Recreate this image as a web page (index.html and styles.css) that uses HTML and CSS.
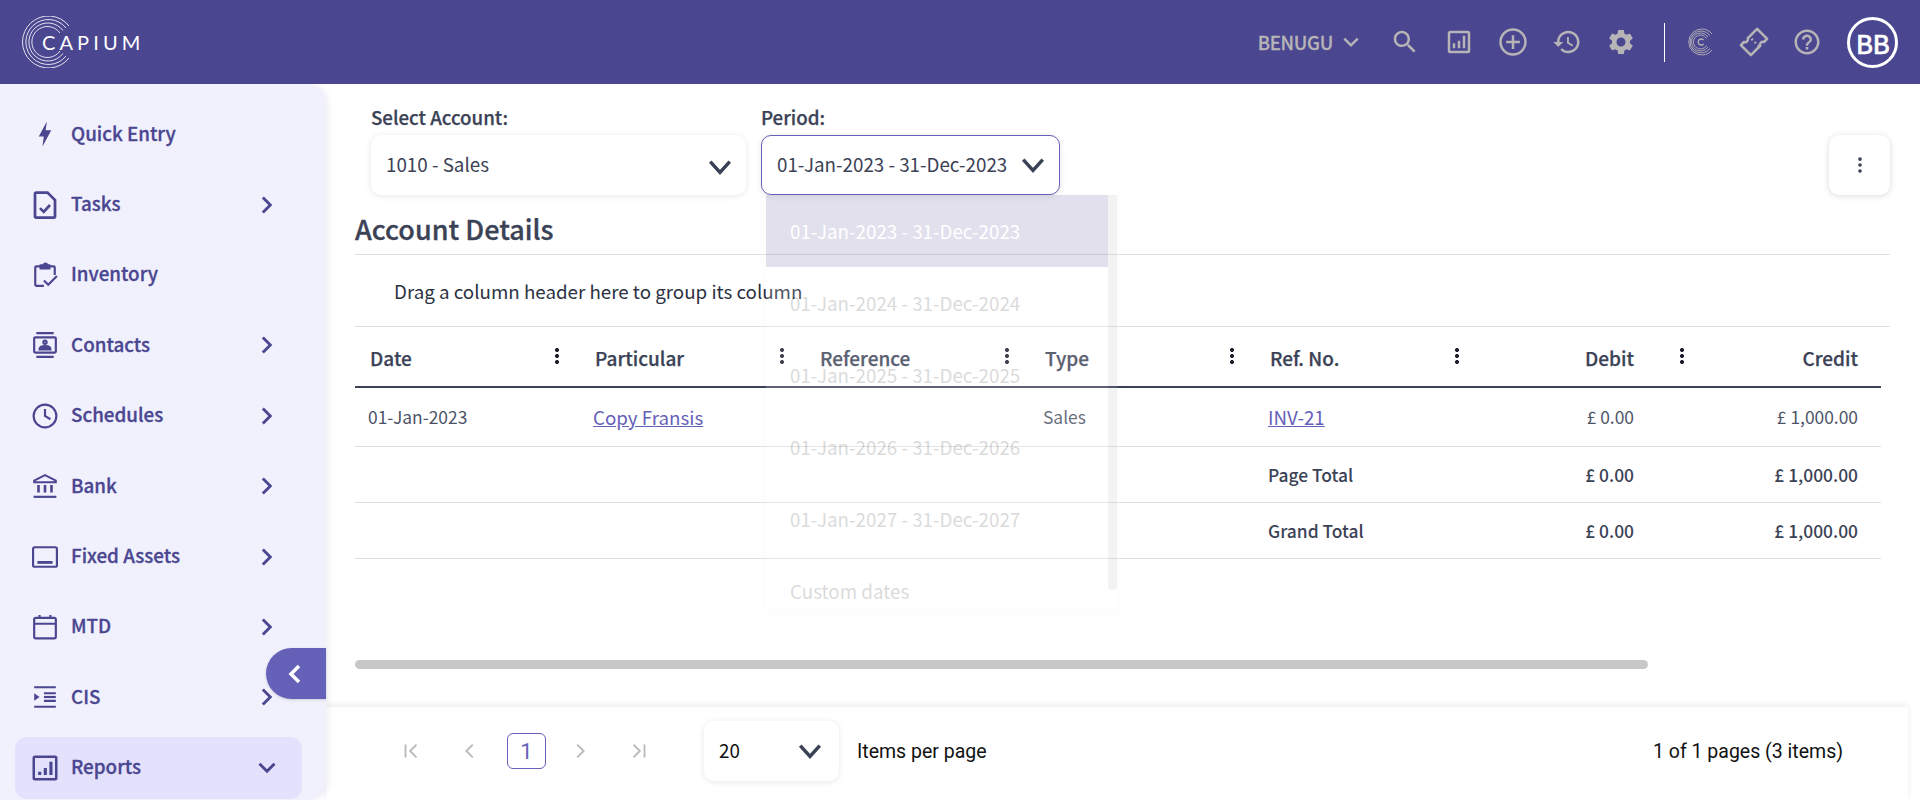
FILE: index.html
```html
<!DOCTYPE html>
<html lang="en">
<head>
    <meta charset="UTF-8">
    <meta name="viewport" content="width=device-width, initial-scale=1.0">
    <title>Account Details</title>
    <link rel="stylesheet" href="styles.css">
</head>

<body>
    <!-- Top bar -->
    <header class="topbar">
        <div class="logo">
            <svg class="logo-rings" viewBox="0 0 52 52" fill="none" stroke="#fff">
                <path stroke-width="1" d="M47 10A26 26 0 1 0 47 42"/>
                <path stroke-width="1" d="M44 12A22.5 22.5 0 1 0 44 40"/>
                <path stroke-width="1" d="M41 14.500A19 19 0 1 0 41 37.500"/>
                <path stroke-width="1" d="M38 17A15.500 15.500 0 1 0 38 35"/>
            </svg>
            <span class="logo-text">CAPIUM</span>
        </div>
        <div class="topbar-right">
            <button class="client">BENUGU
                <svg class="client-caret" viewBox="0 0 24 24"><path d="M4 8l8 8 8-8" fill="none" stroke="currentColor" stroke-width="3"/></svg>
            </button>
            <svg class="top-icon" viewBox="0 0 24 24"><path fill="currentColor" d="M15.5 14h-.79l-.28-.27C15.41 12.59 16 11.11 16 9.5 16 5.91 13.09 3 9.5 3S3 5.91 3 9.5 5.91 16 9.5 16c1.61 0 3.09-.59 4.23-1.57l.27.28v.79l5 4.99L20.49 19l-4.99-5zm-6 0C7.01 14 5 11.990 5 9.500S7.010 5 9.500 5 14 7.010 14 9.500 11.990 14 9.500 14z"/></svg>
            <svg class="top-icon" viewBox="0 0 24 24"><path fill="currentColor" d="M5 3h14a2 2 0 0 1 2 2v14a2 2 0 0 1-2 2H5a2 2 0 0 1-2-2V5a2 2 0 0 1 2-2zm0 2v14h14V5H5zm2 8h2v4H7v-4zm4-2h2v6h-2v-6zm4-4h2v10h-2V7z"/></svg>
            <svg class="top-icon" viewBox="0 0 24 24" fill="none" stroke="currentColor" stroke-width="2"><circle cx="12" cy="12" r="10"/><path d="M12 6.500v11M6.500 12h11"/></svg>
            <svg class="top-icon" viewBox="0 0 24 24"><path fill="currentColor" d="M13 3c-4.970 0-9 4.030-9 9H1l3.890 3.890.07.14L9 12H6c0-3.870 3.130-7 7-7s7 3.130 7 7-3.130 7-7 7c-1.930 0-3.680-.79-4.940-2.060l-1.420 1.420C8.270 19.990 10.510 21 13 21c4.970 0 9-4.030 9-9s-4.030-9-9-9zm-1 5v5l4.280 2.540.72-1.210-3.500-2.080V8H12z"/></svg>
            <svg class="top-icon" viewBox="0 0 24 24"><path fill="currentColor" d="M19.140 12.940c.04-.3.06-.61.06-.94 0-.32-.02-.64-.07-.94l2.030-1.580c.18-.14.23-.41.12-.61l-1.920-3.320c-.12-.22-.37-.29-.59-.22l-2.390.96c-.5-.38-1.030-.7-1.620-.94l-.36-2.540c-.04-.24-.24-.41-.48-.41h-3.840c-.24 0-.43.17-.47.41l-.36 2.540c-.59.24-1.130.57-1.620.94l-2.390-.96c-.22-.08-.47 0-.59.22L2.740 8.870c-.12.21-.08.47.12.61l2.030 1.580c-.05.3-.09.63-.09.94s.02.64.07.94l-2.030 1.580c-.18.14-.23.41-.12.61l1.920 3.320c.12.22.37.29.59.22l2.390-.96c.5.38 1.030.7 1.620.94l.36 2.540c.05.24.24.41.48.41h3.840c.24 0 .44-.17.47-.41l.36-2.540c.59-.24 1.130-.56 1.620-.94l2.390.96c.22.08.47 0 .59-.22l1.920-3.320c.12-.22.07-.47-.12-.61l-2.010-1.580zM12 15.600c-1.980 0-3.600-1.620-3.600-3.600s1.620-3.600 3.600-3.600 3.600 1.620 3.600 3.600-1.620 3.600-3.600 3.600z"/></svg>
            <span class="top-divider"></span>
            <svg class="top-icon top-icon-tight" viewBox="0 0 30 30" fill="none" stroke="currentColor"><path stroke-width=".9" d="M26 7A13 13 0 1 0 26 23"/><path stroke-width=".9" d="M24 8.500A11 11 0 1 0 24 21.500"/><path stroke-width=".9" d="M22 10A9 9 0 1 0 22 20"/><path stroke-width=".9" d="M20.500 11.500A7 7 0 1 0 20.500 18.500"/><path stroke-width="1.300" d="M17.500 13A3 3 0 1 0 17.500 17"/></svg>
            <svg class="top-icon top-icon-tight" viewBox="0 0 24 24" fill="none" stroke="currentColor" stroke-width="2" stroke-linejoin="round"><path d="M14.500 1.500l8 8-2.500 2.500a2.300 2.300 0 0 0-3 3L14 18 9.500 22.500l-8-8L4 12a2.300 2.300 0 0 0 3-3z"/><path d="M10 9.500l1 1M12.500 12l1 1M15 14.500l.5.5" stroke-width="1.800"/></svg>
            <svg class="top-icon top-icon-last" viewBox="0 0 24 24"><path fill="currentColor" d="M11 18h2v-2h-2v2zm1-16C6.480 2 2 6.480 2 12s4.480 10 10 10 10-4.480 10-10S17.520 2 12 2zm0 18c-4.410 0-8-3.590-8-8s3.590-8 8-8 8 3.590 8 8-3.590 8-8 8zm0-14c-2.210 0-4 1.790-4 4h2c0-1.100.9-2 2-2s2 .9 2 2c0 2-3 1.750-3 5h2c0-2.250 3-2.500 3-5 0-2.210-1.790-4-4-4z"/></svg>
            <span class="avatar">BB</span>
        </div>
    </header>

    <div class="layout">
        <!-- Side navigation -->
        <aside class="sidebar">
            <nav class="side-nav">
                <a class="nav-item">
                    <svg class="nav-icon" viewBox="0 0 24 24"><path fill="currentColor" d="M13.500 2L7 14h4l-1 8 7-13h-4.500z"/></svg>
                    <span class="nav-label">Quick Entry</span>
                </a>
                <a class="nav-item">
                    <svg class="nav-icon" viewBox="0 0 24 24" fill="none" stroke="currentColor" stroke-width="2.200"><path d="M5 2h9l6 6v13a1 1 0 0 1-1 1H5a1 1 0 0 1-1-1V3a1 1 0 0 1 1-1z"/><path d="M8 14.500l3 3 5-5.500"/></svg>
                    <span class="nav-label">Tasks</span>
                    <svg class="nav-arrow" viewBox="0 0 24 24"><path d="M7 3l9 9-9 9"/></svg>
                </a>
                <a class="nav-item">
                    <svg class="nav-icon nav-icon-lg" viewBox="0 0 24 24" fill="none" stroke="currentColor" stroke-width="2"><path d="M11 22H4a1 1 0 0 1-1-1V5a1 1 0 0 1 1-1h16a1 1 0 0 1 1 1v7"/><path d="M8 6V3h3a1.500 1.500 0 0 1 3 0h2v3z" fill="currentColor"/><path d="M11 17l4 4 8-8"/></svg>
                    <span class="nav-label">Inventory</span>
                </a>
                <a class="nav-item">
                    <svg class="nav-icon nav-icon-lg" viewBox="0 0 24 24" fill="none" stroke="currentColor" stroke-width="2"><path d="M4 1h16M4 23h16"/><rect x="2" y="5" width="20" height="14" rx="1"/><circle cx="12" cy="9.500" r="1.500"/><path d="M7 16c0-2 2.500-3 5-3s5 1 5 3z" fill="currentColor"/></svg>
                    <span class="nav-label">Contacts</span>
                    <svg class="nav-arrow" viewBox="0 0 24 24"><path d="M7 3l9 9-9 9"/></svg>
                </a>
                <a class="nav-item">
                    <svg class="nav-icon nav-icon-lg" viewBox="0 0 24 24" fill="none" stroke="currentColor" stroke-width="2"><circle cx="12" cy="12" r="10.500"/><path d="M12 5.500V12l5 3"/></svg>
                    <span class="nav-label">Schedules</span>
                    <svg class="nav-arrow" viewBox="0 0 24 24"><path d="M7 3l9 9-9 9"/></svg>
                </a>
                <a class="nav-item">
                    <svg class="nav-icon nav-icon-lg" viewBox="0 0 24 24" fill="none" stroke="currentColor" stroke-width="2"><path d="M2 7l10-5 10 5v1.500H2z" fill="none" stroke-width="1.800"/><path d="M6 11v7M12 11v7M18 11v7" stroke-width="2.400"/><path d="M1.500 22h21"/></svg>
                    <span class="nav-label">Bank</span>
                    <svg class="nav-arrow" viewBox="0 0 24 24"><path d="M7 3l9 9-9 9"/></svg>
                </a>
                <a class="nav-item">
                    <svg class="nav-icon nav-icon-lg" viewBox="0 0 24 24" fill="none" stroke="currentColor" stroke-width="2"><rect x="1" y="3" width="22" height="18" rx="1.500"/><path d="M5 17h14" stroke-width="2.600"/></svg>
                    <span class="nav-label">Fixed Assets</span>
                    <svg class="nav-arrow" viewBox="0 0 24 24"><path d="M7 3l9 9-9 9"/></svg>
                </a>
                <a class="nav-item">
                    <svg class="nav-icon nav-icon-lg" viewBox="0 0 24 24" fill="none" stroke="currentColor" stroke-width="2"><rect x="2" y="3.500" width="20" height="19" rx="1.500"/><path d="M2 9h20M7 1v3M17 1v3"/></svg>
                    <span class="nav-label">MTD</span>
                    <svg class="nav-arrow" viewBox="0 0 24 24"><path d="M7 3l9 9-9 9"/></svg>
                </a>
                <a class="nav-item">
                    <svg class="nav-icon nav-icon-lg" viewBox="0 0 24 24" fill="none" stroke="currentColor" stroke-width="2"><path d="M2 3h20M11 8.500h11M11 15.500h11M2 21h20"/><path d="M2 8.500l5 3.500-5 3.500z" fill="currentColor" stroke="none"/><path d="M11 12h11"/></svg>
                    <span class="nav-label">CIS</span>
                    <svg class="nav-arrow" viewBox="0 0 24 24"><path d="M7 3l9 9-9 9"/></svg>
                </a>
                <a class="nav-item nav-item-active">
                    <svg class="nav-icon" viewBox="0 0 24 24"><path fill="currentColor" d="M4 2h16a2 2 0 0 1 2 2v16a2 2 0 0 1-2 2H4a2 2 0 0 1-2-2V4a2 2 0 0 1 2-2zm0 2v16h16V4H4zm2.500 11h2.500v2.500H6.500V15zm4.500-3h2.500v5.500H11V12zm4.500-5H18v10.500h-2.500V7z"/></svg>
                    <span class="nav-label">Reports</span>
                    <svg class="nav-arrow" viewBox="0 0 24 24"><path d="M3 7l9 9 9-9"/></svg>
                </a>
            </nav>
            <button class="collapse-tab">
                <svg viewBox="0 0 24 24"><path d="M16 4l-8 8 8 8" fill="none" stroke="#fff" stroke-width="3.500"/></svg>
            </button>
        </aside>

        <!-- Main content -->
        <main class="content">
            <div class="filters">
                <div class="field field-account">
                    <label class="field-label">Select Account:</label>
                    <div class="select-box">
                        <span class="select-value">1010 - Sales</span>
                        <svg class="caret caret-low" viewBox="0 0 24 24"><path d="M3 7l9 10 9-10"/></svg>
                    </div>
                </div>
                <div class="field field-period">
                    <label class="field-label">Period:</label>
                    <div class="select-box select-open">
                        <span class="select-value">01-Jan-2023 - 31-Dec-2023</span>
                        <svg class="caret" viewBox="0 0 24 24"><path d="M3 7l9 10 9-10"/></svg>
                    </div>
                </div>
                <button class="more-btn">
                    <svg viewBox="0 0 24 24"><circle cx="12" cy="5.500" r="2"/><circle cx="12" cy="12" r="2"/><circle cx="12" cy="18.500" r="2"/></svg>
                </button>
            </div>

            <h2 class="page-title">Account Details</h2>
            <div class="group-hint">Drag a column header here to group its column</div>

            <table class="grid">
                <thead>
                    <tr>
                        <th class="col-date">Date<span class="col-menu"></span></th>
                        <th class="col-part">Particular<span class="col-menu"></span></th>
                        <th class="col-ref">Reference<span class="col-menu"></span></th>
                        <th class="col-type">Type<span class="col-menu"></span></th>
                        <th class="col-no">Ref. No.<span class="col-menu"></span></th>
                        <th class="col-debit num">Debit<span class="col-menu"></span></th>
                        <th class="col-credit num">Credit</th>
                    </tr>
                </thead>
                <tbody>
                    <tr class="data-row">
                        <td>01-Jan-2023</td>
                        <td><a class="grid-link">Copy Fransis</a></td>
                        <td></td>
                        <td>Sales</td>
                        <td><a class="grid-link">INV-21</a></td>
                        <td class="num">£ 0.00</td>
                        <td class="num">£ 1,000.00</td>
                    </tr>
                    <tr class="total-row">
                        <td></td><td></td><td></td><td></td>
                        <td>Page Total</td>
                        <td class="num">£ 0.00</td>
                        <td class="num">£ 1,000.00</td>
                    </tr>
                    <tr class="total-row">
                        <td></td><td></td><td></td><td></td>
                        <td>Grand Total</td>
                        <td class="num">£ 0.00</td>
                        <td class="num">£ 1,000.00</td>
                    </tr>
                </tbody>
            </table>

            <div class="h-scroll"><div class="h-scroll-thumb"></div></div>

            <!-- Period dropdown, still fading in -->
            <div class="period-menu">
                <div class="period-list">
                    <div class="period-option period-option-active">01-Jan-2023 - 31-Dec-2023</div>
                    <div class="period-option">01-Jan-2024 - 31-Dec-2024</div>
                    <div class="period-option">01-Jan-2025 - 31-Dec-2025</div>
                    <div class="period-option">01-Jan-2026 - 31-Dec-2026</div>
                    <div class="period-option">01-Jan-2027 - 31-Dec-2027</div>
                    <div class="period-option">Custom dates</div>
                </div>
                <div class="period-scroll"></div>
            </div>

            <footer class="pager">
                <div class="pager-nav">
                    <svg class="pager-icon" viewBox="0 0 24 24"><path d="M6 5v14M18 5l-7 7 7 7"/></svg>
                    <svg class="pager-icon pager-icon-prev" viewBox="0 0 24 24"><path d="M15 5l-7 7 7 7"/></svg>
                    <span class="pager-current">1</span>
                    <svg class="pager-icon" viewBox="0 0 24 24"><path d="M9 5l7 7-7 7"/></svg>
                    <svg class="pager-icon" viewBox="0 0 24 24"><path d="M18 5v14M6 5l7 7-7 7"/></svg>
                </div>
                <div class="select-box select-size">
                    <span class="select-value">20</span>
                    <svg class="caret" viewBox="0 0 24 24"><path d="M3 7l9 10 9-10"/></svg>
                </div>
                <span class="pager-text">Items per page</span>
                <span class="pager-text pager-info">1 of 1 pages (3 items)</span>
            </footer>
        </main>
    </div>
</body>
</html>
```

FILE: styles.css
```css
* {
    box-sizing: border-box;
}

body {
    font-family: "Noto Sans CJK SC", "Noto Sans", sans-serif;
    margin: 0;
    height: 800px;
    overflow: hidden; /* App shell, nothing scrolls */
    background: #fff;
    color: #3b4256;
}

button {
    font: inherit;
    border: none;
    background: none;
    padding: 0;
}

/* Top bar */
.topbar {
    height: 84px;
    background: #4a4690;
    display: flex;
    align-items: center;
    justify-content: space-between;
    padding: 0 22px;
}

.logo {
    display: flex;
    align-items: center;
}

.logo-rings {
    width: 52px;
    height: 52px;
    opacity: .85;
}

.logo-text {
    font-family: Lato, sans-serif;
    font-size: 20px;
    letter-spacing: 4.1px;
    color: #fff;
    margin-left: -32px;
}

.topbar-right {
    display: flex;
    align-items: center;
    color: #b6b4b6;
}

.client {
    display: flex;
    align-items: center;
    color: #b6b4b6;
    font-size: 18.5px;
    font-weight: 500;
    letter-spacing: -.3px;
    -webkit-text-stroke: .3px #b6b4b6;
    margin-right: 29px;
}

.client-caret {
    width: 20px;
    height: 20px;
    margin-left: 8px;
}

.top-icon {
    width: 30px;
    height: 30px;
    margin-right: 24px;
}

.top-icon-tight {
    margin-right: 23px;
}

.top-icon-last {
    margin-right: 25px;
}

.top-divider {
    width: 1px;
    height: 39px;
    background: #fff;
    margin: 0 21px 0 4px;
}

.avatar {
    width: 51px;
    height: 51px;
    border: 3px solid #fff;
    border-radius: 50%;
    color: #fff;
    font-size: 26px;
    font-weight: 500;
    letter-spacing: -.5px;
    -webkit-text-stroke: .3px #fff;
    display: flex;
    align-items: center;
    justify-content: center;
}

.layout {
    display: flex;
    height: 716px;
}

/* Side navigation */
.sidebar {
    width: 326px;
    flex-shrink: 0;
    background: #f1f0fd;
    border-radius: 0 20px 20px 0;
    box-shadow: 2px 0 6px rgba(74, 70, 144, 0.1);
    position: relative;
    z-index: 2;
}

.side-nav {
    display: flex;
    flex-direction: column;
    gap: 8px;
    padding: 19px 24px 0 15px;
}

.nav-item {
    height: 62.4px;
    display: flex;
    align-items: center;
    padding: 0 0 0 15px;
    border-radius: 12px;
    color: #4a4690;
}

.nav-item-active {
    background: #e3e1fb;
}

.nav-icon {
    width: 30px;
    height: 30px;
    flex-shrink: 0;
}

.nav-icon-lg {
    width: 26px;
    height: 30px;
    margin: 0 2px;
}

.nav-label {
    margin-left: 11px;
    padding-bottom: 4px;
    font-size: 18.8px;
    font-weight: 500;
    -webkit-text-stroke: .3px #4a4690;
    flex-grow: 1;
}

.nav-arrow {
    width: 20px;
    height: 20px;
    margin-right: 25px;
    fill: none;
    stroke: currentColor;
    stroke-width: 3.4;
}

.collapse-tab {
    position: absolute;
    right: 0;
    top: 564px;
    width: 60px;
    height: 51px;
    background: #6560b8;
    border-radius: 26px 0 0 26px;
    box-shadow: 0 1px 3px rgba(0, 0, 0, 0.15);
    display: flex;
    align-items: center;
    justify-content: center;
}

.collapse-tab svg {
    width: 24px;
    height: 24px;
    margin-right: 2px;
}

/* Main content */
.content {
    flex-grow: 1;
    position: relative;
    padding: 0 30px 0 29px;
}

.filters {
    display: flex;
    align-items: flex-end;
    padding: 20px 0 0 16px;
    height: 111px;
}

.field-label {
    display: block;
    font-size: 18.7px;
    font-weight: 500;
    line-height: 28px;
    margin-bottom: 4px;
    -webkit-text-stroke: .25px #3b4256;
}

.field-account {
    width: 375px;
    margin-right: 15px;
}

.field-period {
    width: 299px;
}

.select-box {
    height: 60px;
    display: flex;
    align-items: center;
    justify-content: space-between;
    padding: 0 13px 0 15px;
    border-radius: 10px;
    background: #fff;
    box-shadow: 0 1px 6px rgba(0, 0, 0, 0.1);
    font-size: 18.8px;
}

.select-value {
    padding-bottom: 4px;
}

.select-open {
    border: 1px solid #6560b8;
}

.caret {
    width: 26px;
    height: 26px;
    flex-shrink: 0;
    fill: none;
    stroke: #3b4256;
    stroke-width: 3.2;
}

.caret-low {
    margin-top: 4px;
}

.more-btn {
    margin-left: auto;
    width: 61px;
    height: 60px;
    border-radius: 10px;
    box-shadow: 0 1px 6px rgba(0, 0, 0, 0.15);
    display: flex;
    align-items: center;
    justify-content: center;
}

.more-btn svg {
    width: 22px;
    height: 22px;
    fill: #3b4256;
}

.page-title {
    margin: 0;
    height: 60px;
    padding-top: 12px;
    font-size: 27px;
    line-height: 44px;
    font-weight: 500;
    -webkit-text-stroke: .3px #3b4256;
    border-bottom: 1px solid #e0e0e0;
}

.group-hint {
    height: 72px;
    padding-left: 39px;
    display: flex;
    align-items: center;
    font-size: 18.75px;
    color: #2c3242;
    border-bottom: 1px solid #e0e0e0;
}

/* Grid */
.grid {
    width: 1526px;
    table-layout: fixed;
    border-collapse: collapse;
    font-size: 17.4px;
}

.grid th {
    height: 60px;
    text-align: left;
    font-size: 19px;
    font-weight: 500;
    -webkit-text-stroke: .25px #3b4256;
    padding: 2px 0 0 15px;
    position: relative;
    border-bottom: 2px solid #3b4256;
}

.grid td {
    height: 56px;
    padding: 0 0 0 13px;
    border-bottom: 1px solid #e0e0e0;
    color: #4c5367;
}

.grid .data-row td {
    height: 59px;
}

.grid .num {
    text-align: right;
    padding-right: 71px;
}

.grid .col-credit,
.grid td:last-child {
    padding-right: 23px;
}

.col-date,
.col-part,
.col-ref,
.col-type,
.col-no,
.col-debit {
    width: 225px;
}

.col-menu {
    position: absolute;
    right: 21px;
    top: 20px;
    width: 4px;
    height: 18px;
    background: radial-gradient(circle, #1d1f2b 1.9px, transparent 2.2px) 0 0 / 4px 6px;
}

.grid-link {
    color: #6560b8;
    text-decoration: underline;
    font-size: 18.75px;
}

.grid .total-row td {
    color: #3b4256;
    font-weight: 500;
}

.h-scroll {
    margin-top: 101px;
    height: 9px;
}

.h-scroll-thumb {
    width: 1293px;
    height: 9px;
    border-radius: 5px;
    background: #c8c8c8;
}

/* Period dropdown, mid fade */
.period-menu {
    position: absolute;
    left: 440px;
    top: 111px;
    width: 351px;
    height: 414px;
    display: flex;
    background: #fff;
    box-shadow: 0 4px 10px rgba(0, 0, 0, 0.08);
    opacity: .16;
}

.period-list {
    width: 342px;
}

.period-scroll {
    width: 9px;
    height: 395px;
    border-radius: 0 0 4px 4px;
    background: #bbb;
}

.period-option {
    height: 72px;
    padding: 0 0 2px 24px;
    display: flex;
    align-items: center;
    font-size: 18.8px;
    color: #222;
}

.period-option-active {
    background: #4a4690;
    color: #fff;
}

/* Pager */
.pager {
    position: absolute;
    left: 0;
    right: 12px;
    top: 623px;
    height: 93px;
    background: #fff;
    box-shadow: 0 -2px 6px rgba(0, 0, 0, 0.08);
    display: flex;
    align-items: center;
    padding: 0 0 5px 74px;
    font-family: Roboto, sans-serif;
    color: #111;
}

.pager-nav {
    display: flex;
    align-items: center;
    width: 304px;
}

.pager-icon {
    width: 22px;
    height: 22px;
    fill: none;
    stroke: #b9b9b9;
    stroke-width: 2;
    margin-right: 37px;
}

.pager-icon-prev {
    margin-right: 26px;
}

.pager-current {
    width: 39px;
    height: 36px;
    border: 1px solid #6560b8;
    border-radius: 6px;
    color: #6560b8;
    font-size: 22px;
    display: flex;
    align-items: center;
    justify-content: center;
    margin-right: 23px;
}

.select-size {
    width: 135px;
    color: #111;
    padding-right: 16px;
    font-family: "Noto Sans CJK SC", sans-serif;
}

.pager-text {
    font-size: 19.5px;
    margin-left: 18px;
}

.pager-info {
    margin-left: auto;
    margin-right: 65px;
}
```
